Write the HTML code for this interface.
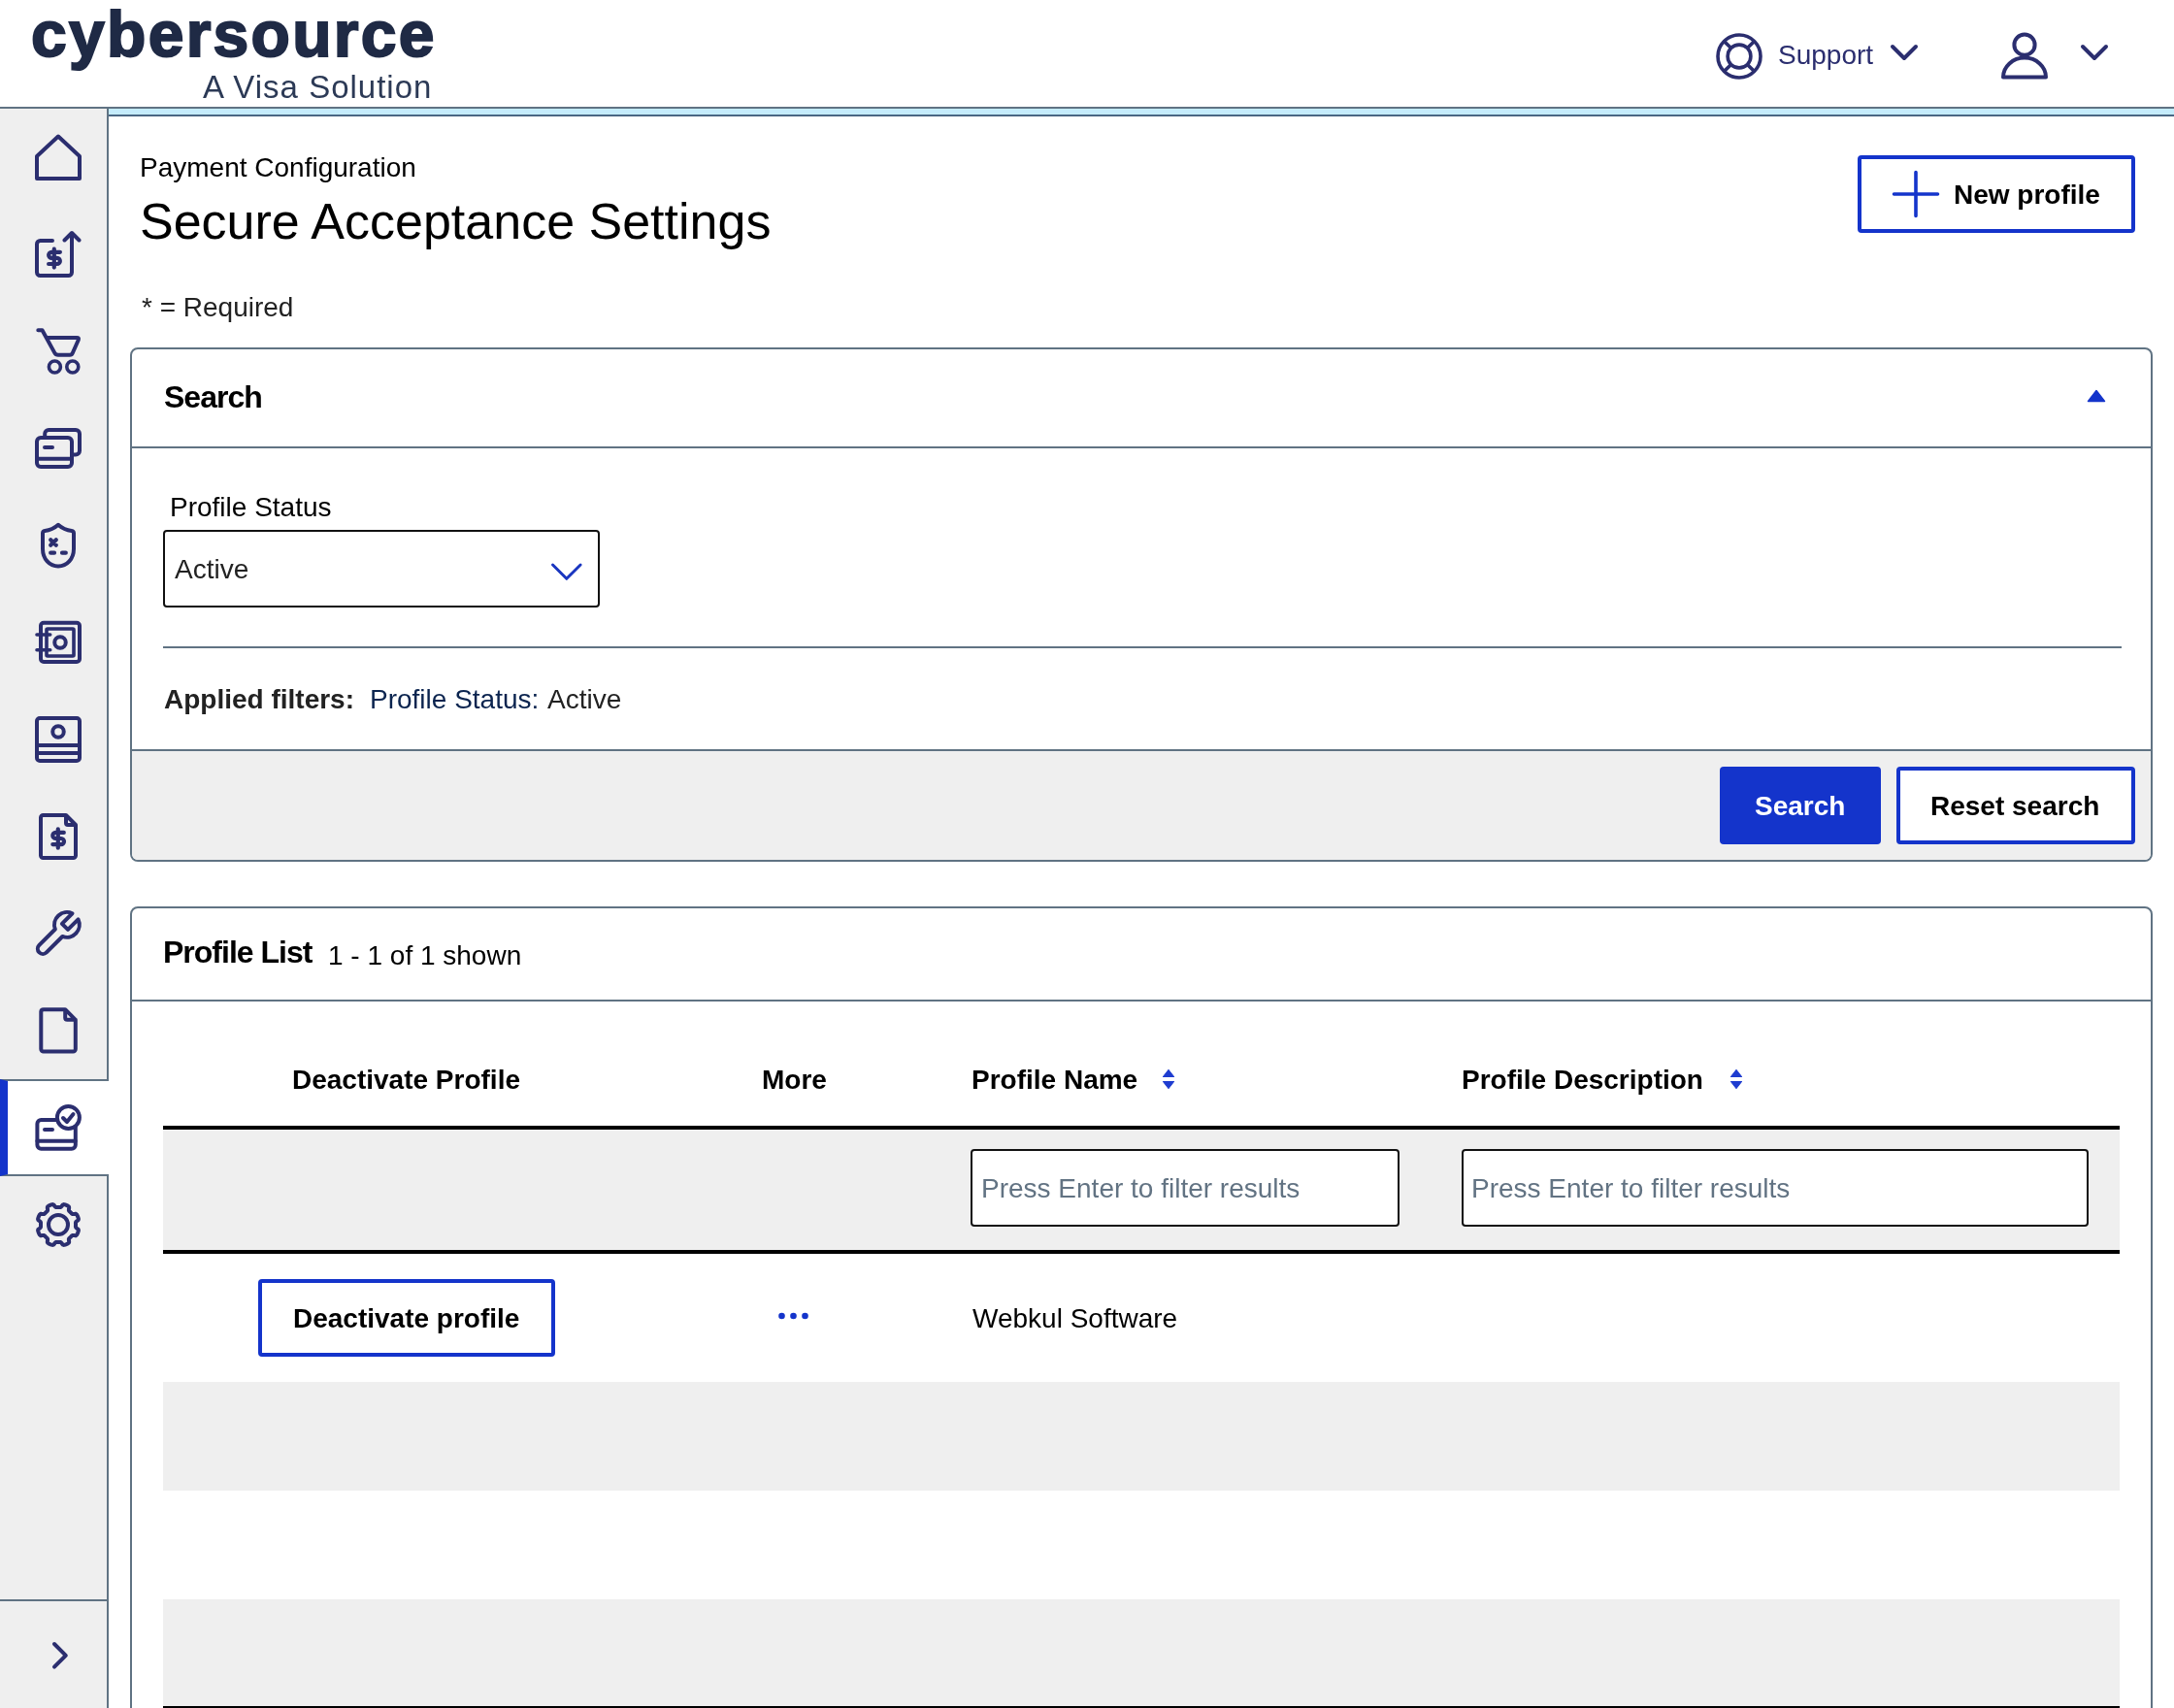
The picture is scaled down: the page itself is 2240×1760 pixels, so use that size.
<!DOCTYPE html>
<html><head><meta charset="utf-8">
<style>
html,body{margin:0;padding:0;width:2240px;height:1760px;overflow:hidden;background:#fff;font-family:"Liberation Sans",sans-serif;}
.a{position:absolute;}
.t{position:absolute;white-space:nowrap;line-height:1;font-size:28px;will-change:transform;}
.b{font-weight:700;}
svg{position:absolute;overflow:visible;}
.ic{fill:none;stroke:#2b2e6f;stroke-width:4;stroke-linecap:round;stroke-linejoin:round;}
</style></head>
<body>
<!-- HEADER -->
<div class="a" style="left:0;top:0;width:2240px;height:110px;background:#fff;border-bottom:2px solid #607383;"></div>
<div class="t b" id="logo1" style="left:32px;top:2px;-webkit-text-stroke:2px #1f2a45;font-size:66px;color:#1f2a45;letter-spacing:2.3px;">cybersource</div>
<div class="t" id="logo2" style="left:209px;top:73px;font-size:33px;color:#2c3a56;letter-spacing:1.0px;">A Visa Solution</div>

<svg class="ic" style="left:1768px;top:34px;stroke-width:3.6" width="48" height="48" viewBox="0 0 48 48">
  <circle cx="24" cy="24" r="22"/>
  <circle cx="24" cy="24" r="11.9"/>
  <path d="M8.4 8.4 L15.6 15.6 M39.6 8.4 L32.4 15.6 M8.4 39.6 L15.6 32.4 M39.6 39.6 L32.4 32.4" style="stroke-linecap:butt"/>
</svg>
<div class="t" id="support" style="left:1832px;top:43px;color:#2b2e6f;">Support</div>
<svg class="ic" style="left:1948px;top:45px" width="30" height="20" viewBox="0 0 30 20"><path d="M2 3 L14 15 L26 3"/></svg>
<svg class="ic" style="left:2062px;top:33px" width="50" height="50" viewBox="0 0 50 50">
  <circle cx="24" cy="13.2" r="10.6"/>
  <path d="M2 46.6 A22 20 0 0 1 46 46.6 Z"/>
</svg>
<svg class="ic" style="left:2144px;top:45px" width="30" height="20" viewBox="0 0 30 20"><path d="M2 3 L14 15 L26 3"/></svg>

<!-- SIDEBAR -->
<div class="a" style="left:0;top:112px;width:110px;height:1648px;background:#efefef;border-right:2px solid #607383;"></div>
<div class="a" style="left:0;top:1112px;width:104px;height:96px;background:#fff;border-left:8px solid #1434cb;border-top:2px solid #607383;border-bottom:2px solid #607383;"></div>
<div class="a" style="left:110px;top:1114px;width:2px;height:96px;background:#fff;"></div>
<div class="a" style="left:0;top:1648px;width:110px;height:2px;background:#607383;"></div>

<!-- icon 1 home -->
<svg class="ic" style="left:36px;top:138px" width="48" height="48" viewBox="0 0 48 48"><path d="M2 46 V23 L24 2.5 L46 23 V46 Z"/></svg>
<!-- icon 2 $ up -->
<svg class="ic" style="left:36px;top:238px" width="48" height="48" viewBox="0 0 48 48">
  <path d="M18 10 H5.5 A3.5 3.5 0 0 0 2 13.5 V42.5 A3.5 3.5 0 0 0 5.5 46 H34.5 A3.5 3.5 0 0 0 38 42.5 V2 M30.5 9.5 L38 2 L45.5 9.5"/>
  <path style="stroke-width:4.2" d="M25.9 21.8 H17.2 A3.05 3.05 0 0 0 17.2 27.9 H22.8 A3.05 3.05 0 0 1 22.8 34 H14.1 M19.8 18.7 V37.6"/>
</svg>
<!-- icon 3 cart -->
<svg class="ic" style="left:36px;top:338px" width="48" height="48" viewBox="0 0 48 48">
  <path d="M3.3 2.2 H7.5 L20.3 25.6 Q21.5 27.8 24 27.8 H36 Q38 27.8 38.8 25.8 L44.8 12.2 Q45.6 10 43.2 10 H11.8"/>
  <circle style="stroke-width:3.6" cx="20.4" cy="40" r="6"/>
  <circle style="stroke-width:3.6" cx="38.8" cy="40" r="6"/>
</svg>
<!-- icon 4 cards -->
<svg class="ic" style="left:36px;top:438px" width="48" height="48" viewBox="0 0 48 48">
  <rect x="2" y="13" width="36" height="30" rx="4"/>
  <path d="M2 34.7 H38 M10 22.9 H18"/>
  <path d="M10.2 13 V9 A4 4 0 0 1 14.2 5 H42 A4 4 0 0 1 46 9 V26.5 A4 4 0 0 1 42 30.5 H38"/>
</svg>
<!-- icon 5 shield -->
<svg class="ic" style="left:36px;top:538px" width="48" height="48" viewBox="0 0 48 48">
  <path d="M24 2.8 C19.5 6.8 14 8.6 10.2 9 Q8 9.3 8 11.5 V27.5 C8 38 15 45.5 24 45.5 C33 45.5 40 38 40 27.5 V11.5 Q40 9.3 37.8 9 C34 8.6 28.5 6.8 24 2.8 Z"/>
  <path style="stroke-width:4.2" d="M16.2 18.2 L21.8 23.8 M21.8 18.2 L16.2 23.8 M16.2 31.7 H20 M28 31.7 H31.8"/>
</svg>
<!-- icon 6 safe -->
<svg class="ic" style="left:36px;top:638px" width="48" height="48" viewBox="0 0 48 48">
  <rect x="6" y="3.8" width="40" height="40.2" rx="3"/>
  <rect style="stroke-width:3.6" x="12" y="10" width="28" height="28" rx="1"/>
  <circle cx="26" cy="24" r="5.75"/>
  <path style="stroke-width:3.6" d="M2 16 H15.7 M2 31.7 H15.7"/>
</svg>
<!-- icon 7 monitor person -->
<svg class="ic" style="left:36px;top:738px" width="48" height="48" viewBox="0 0 48 48">
  <rect x="2" y="2" width="44" height="44" rx="3"/>
  <circle cx="24" cy="16" r="5.75"/>
  <path d="M2 30 H46 M2 38 H46"/>
</svg>
<!-- icon 8 doc $ -->
<svg class="ic" style="left:36px;top:838px" width="48" height="48" viewBox="0 0 48 48">
  <path d="M6 4.5 A2.5 2.5 0 0 1 8.5 2 H32 L42 12 V43.5 A2.5 2.5 0 0 1 39.5 46 H8.5 A2.5 2.5 0 0 1 6 43.5 Z M32 2 V10 A2 2 0 0 0 34 12 H42"/>
  <path style="stroke-width:4.2" d="M29.8 19.9 H21.35 A3.05 3.05 0 0 0 21.35 26 H26.95 A3.05 3.05 0 0 1 26.95 32.1 H18.3 M23.8 16.3 V35.7"/>
</svg>
<!-- icon 9 wrench -->
<svg class="ic" style="left:36px;top:938px" width="48" height="48" viewBox="0 0 48 48">
  <g transform="translate(32.9 14.9) rotate(-45)">
    <path d="M12.16 -4.3 H-2.8 V4.3 H12.16 A12.9 12.9 0 0 1 -11.76 5.3 H-35 A5.3 5.3 0 0 1 -35 -5.3 H-11.76 A12.9 12.9 0 0 1 12.16 -4.3"/>
  </g>
</svg>
<!-- icon 10 doc -->
<svg class="ic" style="left:36px;top:1038px" width="48" height="48" viewBox="0 0 48 48">
  <path d="M6.3 4.5 A2.5 2.5 0 0 1 8.8 2.2 H31.2 L41.8 12.8 V43.1 A2.5 2.5 0 0 1 39.3 45.6 H8.8 A2.5 2.5 0 0 1 6.3 43.1 Z M31.2 2.2 V10.8 A2 2 0 0 0 33.2 12.8 H41.8"/>
</svg>
<!-- icon 11 card check -->
<svg class="ic" style="left:36px;top:1138px" width="48" height="48" viewBox="0 0 48 48">
  <rect x="2.4" y="16" width="39.4" height="29.7" rx="4"/>
  <path d="M2.4 37.7 H41.8 M10 25.9 H18"/>
  <circle cx="34.4" cy="13.5" r="11.5" style="fill:#fff"/>
  <path d="M29 14 L33 18 L39.5 10"/>
</svg>
<!-- icon 12 gear -->
<svg class="ic" style="left:36px;top:1238px" width="48" height="48" viewBox="0 0 48 48">
  <path d="M42.00 24.00 L42.00 23.53 L41.98 23.06 L41.96 22.59 L41.96 22.11 L42.02 21.63 L42.28 21.10 L43.00 20.48 L44.03 19.74 L44.70 19.03 L44.89 18.40 L44.85 17.83 L44.71 17.27 L44.54 16.73 L44.35 16.19 L44.14 15.66 L43.91 15.13 L43.67 14.62 L43.41 14.11 L43.11 13.63 L42.73 13.19 L42.15 12.87 L41.18 12.85 L39.92 13.06 L38.97 13.12 L38.42 12.94 L38.03 12.64 L37.70 12.30 L37.38 11.95 L37.06 11.61 L36.73 11.27 L36.39 10.94 L36.05 10.62 L35.70 10.30 L35.36 9.97 L35.06 9.58 L34.88 9.03 L34.94 8.08 L35.15 6.82 L35.13 5.85 L34.81 5.27 L34.37 4.89 L33.89 4.59 L33.38 4.33 L32.87 4.09 L32.34 3.86 L31.81 3.65 L31.27 3.46 L30.73 3.29 L30.17 3.15 L29.60 3.11 L28.97 3.30 L28.26 3.97 L27.52 5.00 L26.90 5.72 L26.37 5.98 L25.89 6.04 L25.41 6.04 L24.94 6.02 L24.47 6.00 L24.00 6.00 L23.53 6.00 L23.06 6.02 L22.59 6.04 L22.11 6.04 L21.63 5.98 L21.10 5.72 L20.48 5.00 L19.74 3.97 L19.03 3.30 L18.40 3.11 L17.83 3.15 L17.27 3.29 L16.73 3.46 L16.19 3.65 L15.66 3.86 L15.13 4.09 L14.62 4.33 L14.11 4.59 L13.63 4.89 L13.19 5.27 L12.87 5.85 L12.85 6.82 L13.06 8.08 L13.12 9.03 L12.94 9.58 L12.64 9.97 L12.30 10.30 L11.95 10.62 L11.61 10.94 L11.27 11.27 L10.94 11.61 L10.62 11.95 L10.30 12.30 L9.97 12.64 L9.58 12.94 L9.03 13.12 L8.08 13.06 L6.82 12.85 L5.85 12.87 L5.27 13.19 L4.89 13.63 L4.59 14.11 L4.33 14.62 L4.09 15.13 L3.86 15.66 L3.65 16.19 L3.46 16.73 L3.29 17.27 L3.15 17.83 L3.11 18.40 L3.30 19.03 L3.97 19.74 L5.00 20.48 L5.72 21.10 L5.98 21.63 L6.04 22.11 L6.04 22.59 L6.02 23.06 L6.00 23.53 L6.00 24.00 L6.00 24.47 L6.02 24.94 L6.04 25.41 L6.04 25.89 L5.98 26.37 L5.72 26.90 L5.00 27.52 L3.97 28.26 L3.30 28.97 L3.11 29.60 L3.15 30.17 L3.29 30.73 L3.46 31.27 L3.65 31.81 L3.86 32.34 L4.09 32.87 L4.33 33.38 L4.59 33.89 L4.89 34.37 L5.27 34.81 L5.85 35.13 L6.82 35.15 L8.08 34.94 L9.03 34.88 L9.58 35.06 L9.97 35.36 L10.30 35.70 L10.62 36.05 L10.94 36.39 L11.27 36.73 L11.61 37.06 L11.95 37.38 L12.30 37.70 L12.64 38.03 L12.94 38.42 L13.12 38.97 L13.06 39.92 L12.85 41.18 L12.87 42.15 L13.19 42.73 L13.63 43.11 L14.11 43.41 L14.62 43.67 L15.13 43.91 L15.66 44.14 L16.19 44.35 L16.73 44.54 L17.27 44.71 L17.83 44.85 L18.40 44.89 L19.03 44.70 L19.74 44.03 L20.48 43.00 L21.10 42.28 L21.63 42.02 L22.11 41.96 L22.59 41.96 L23.06 41.98 L23.53 42.00 L24.00 42.00 L24.47 42.00 L24.94 41.98 L25.41 41.96 L25.89 41.96 L26.37 42.02 L26.90 42.28 L27.52 43.00 L28.26 44.03 L28.97 44.70 L29.60 44.89 L30.17 44.85 L30.73 44.71 L31.27 44.54 L31.81 44.35 L32.34 44.14 L32.87 43.91 L33.38 43.67 L33.89 43.41 L34.37 43.11 L34.81 42.73 L35.13 42.15 L35.15 41.18 L34.94 39.92 L34.88 38.97 L35.06 38.42 L35.36 38.03 L35.70 37.70 L36.05 37.38 L36.39 37.06 L36.73 36.73 L37.06 36.39 L37.38 36.05 L37.70 35.70 L38.03 35.36 L38.42 35.06 L38.97 34.88 L39.92 34.94 L41.18 35.15 L42.15 35.13 L42.73 34.81 L43.11 34.37 L43.41 33.89 L43.67 33.38 L43.91 32.87 L44.14 32.34 L44.35 31.81 L44.54 31.27 L44.71 30.73 L44.85 30.17 L44.89 29.60 L44.70 28.97 L44.03 28.26 L43.00 27.52 L42.28 26.90 L42.02 26.37 L41.96 25.89 L41.96 25.41 L41.98 24.94 L42.00 24.47 Z"/>
  <circle cx="24" cy="24" r="10"/>
</svg>
<!-- chevron right -->
<svg class="ic" style="left:50px;top:1688px" width="24" height="36" viewBox="0 0 24 36"><path d="M6 6 L17.8 17.8 L6 29.6"/></svg>

<!-- CONTENT TOP BAR -->
<div class="a" style="left:112px;top:112px;width:2128px;height:6px;background:#c5ecfc;border-bottom:2px solid #4a6784;"></div>

<!-- TITLES -->
<div class="t" style="left:144px;top:159px;color:#000;">Payment Configuration</div>
<div class="t" style="left:144px;top:202px;font-size:52px;color:#000;">Secure Acceptance Settings</div>
<div class="t" style="left:146px;top:303px;color:#222;">* = Required</div>

<!-- New profile btn -->
<div class="a" style="left:1914px;top:160px;width:278px;height:72px;border:4px solid #1434cb;border-radius:4px;"></div>
<svg class="a" style="left:1948px;top:174px" width="52" height="52" viewBox="0 0 52 52"><path d="M26 3.5 V48.5 M3.5 26 H48.5" stroke="#1434cb" stroke-width="3.6" stroke-linecap="round" fill="none"/></svg>
<div class="t b" style="left:2013px;top:187px;color:#000;">New profile</div>

<!-- SEARCH PANEL -->
<div class="a" style="left:134px;top:358px;width:2080px;height:526px;border:2px solid #607383;border-radius:8px;overflow:hidden;">
  <div class="a" style="left:0;top:100px;width:2080px;height:2px;background:#607383;"></div>
  <div class="a" style="left:0;top:412px;width:2080px;height:114px;background:#efefef;border-top:2px solid #607383;"></div>
</div>
<div class="t b" style="left:169px;top:393px;font-size:32px;letter-spacing:-1px;color:#000;">Search</div>
<svg class="a" style="left:2150px;top:401px" width="20" height="14" viewBox="0 0 20 14"><path d="M10 1.5 L18.5 12.5 H1.5 Z" fill="#1434cb" stroke="#1434cb" stroke-width="1.5" stroke-linejoin="round"/></svg>

<div class="t" style="left:175px;top:509px;color:#000;">Profile Status</div>
<div class="a" style="left:168px;top:546px;width:446px;height:76px;border:2px solid #111;border-radius:4px;background:#fff;"></div>
<div class="t" style="left:180px;top:573px;color:#222;">Active</div>
<svg class="a" style="left:566px;top:579px" width="36" height="22" viewBox="0 0 36 22"><path d="M3.5 3 L17.8 17.3 L32.1 3" stroke="#1a36c0" stroke-width="3" stroke-linecap="round" stroke-linejoin="round" fill="none"/></svg>
<div class="a" style="left:168px;top:666px;width:2018px;height:2px;background:#607383;"></div>
<div class="t b" style="left:169px;top:707px;color:#222;">Applied filters:</div>
<div class="t" style="left:381px;top:707px;color:#0b244f;">Profile Status: <span style="color:#222;margin-left:1px">Active</span></div>

<div class="a" style="left:1772px;top:790px;width:166px;height:80px;background:#1434cb;border-radius:4px;"></div>
<div class="t b" style="left:1808px;top:817px;color:#fff;">Search</div>
<div class="a" style="left:1954px;top:790px;width:238px;height:72px;border:4px solid #1434cb;border-radius:4px;background:#fff;"></div>
<div class="t b" style="left:1989px;top:817px;color:#000;">Reset search</div>

<!-- PROFILE LIST PANEL -->
<div class="a" style="left:134px;top:934px;width:2080px;height:900px;border:2px solid #607383;border-radius:8px;overflow:hidden;">
  <div class="a" style="left:0;top:94px;width:2080px;height:2px;background:#607383;"></div>
</div>
<div class="t b" style="left:168px;top:965px;font-size:32px;letter-spacing:-1px;color:#000;">Profile List</div>
<div class="t" style="left:338px;top:971px;color:#000;">1 - 1 of 1 shown</div>

<!-- table -->
<div class="t b" style="left:301px;top:1099px;color:#000;">Deactivate Profile</div>
<div class="t b" style="left:785px;top:1099px;color:#000;">More</div>
<div class="t b" style="left:1001px;top:1099px;color:#000;">Profile Name</div>
<svg class="a" style="left:1197px;top:1101px" width="14" height="22" viewBox="0 0 14 22"><path d="M7 1.5 L12.5 8.5 H1.5 Z M7 20.5 L12.5 13.5 H1.5 Z" fill="#1f3dd0" stroke="#1f3dd0" stroke-width="1.2" stroke-linejoin="round"/></svg>
<div class="t b" style="left:1506px;top:1099px;color:#000;">Profile Description</div>
<svg class="a" style="left:1782px;top:1101px" width="14" height="22" viewBox="0 0 14 22"><path d="M7 1.5 L12.5 8.5 H1.5 Z M7 20.5 L12.5 13.5 H1.5 Z" fill="#1f3dd0" stroke="#1f3dd0" stroke-width="1.2" stroke-linejoin="round"/></svg>

<div class="a" style="left:168px;top:1160px;width:2016px;height:124px;background:#efefef;border-top:4px solid #000;border-bottom:4px solid #000;"></div>
<div class="a" style="left:1000px;top:1184px;width:438px;height:76px;border:2px solid #111;border-radius:4px;background:#fff;"></div>
<div class="t" style="left:1011px;top:1211px;color:#627383;">Press Enter to filter results</div>
<div class="a" style="left:1506px;top:1184px;width:642px;height:76px;border:2px solid #111;border-radius:4px;background:#fff;"></div>
<div class="t" style="left:1516px;top:1211px;color:#627383;">Press Enter to filter results</div>

<div class="a" style="left:266px;top:1318px;width:298px;height:72px;border:4px solid #1434cb;border-radius:4px;"></div>
<div class="t b" style="left:302px;top:1345px;color:#000;">Deactivate profile</div>
<svg class="a" style="left:800px;top:1350px" width="36" height="12" viewBox="0 0 36 12"><circle cx="5.5" cy="6" r="3.3" fill="#1434cb"/><circle cx="17.5" cy="6" r="3.3" fill="#1434cb"/><circle cx="29.5" cy="6" r="3.3" fill="#1434cb"/></svg>
<div class="t" style="left:1002px;top:1345px;color:#000;">Webkul Software</div>

<div class="a" style="left:168px;top:1424px;width:2016px;height:112px;background:#efefef;"></div>
<div class="a" style="left:168px;top:1648px;width:2016px;height:110px;background:#efefef;"></div>
<div class="a" style="left:168px;top:1758px;width:2016px;height:4px;background:#000;"></div>
</body></html>
